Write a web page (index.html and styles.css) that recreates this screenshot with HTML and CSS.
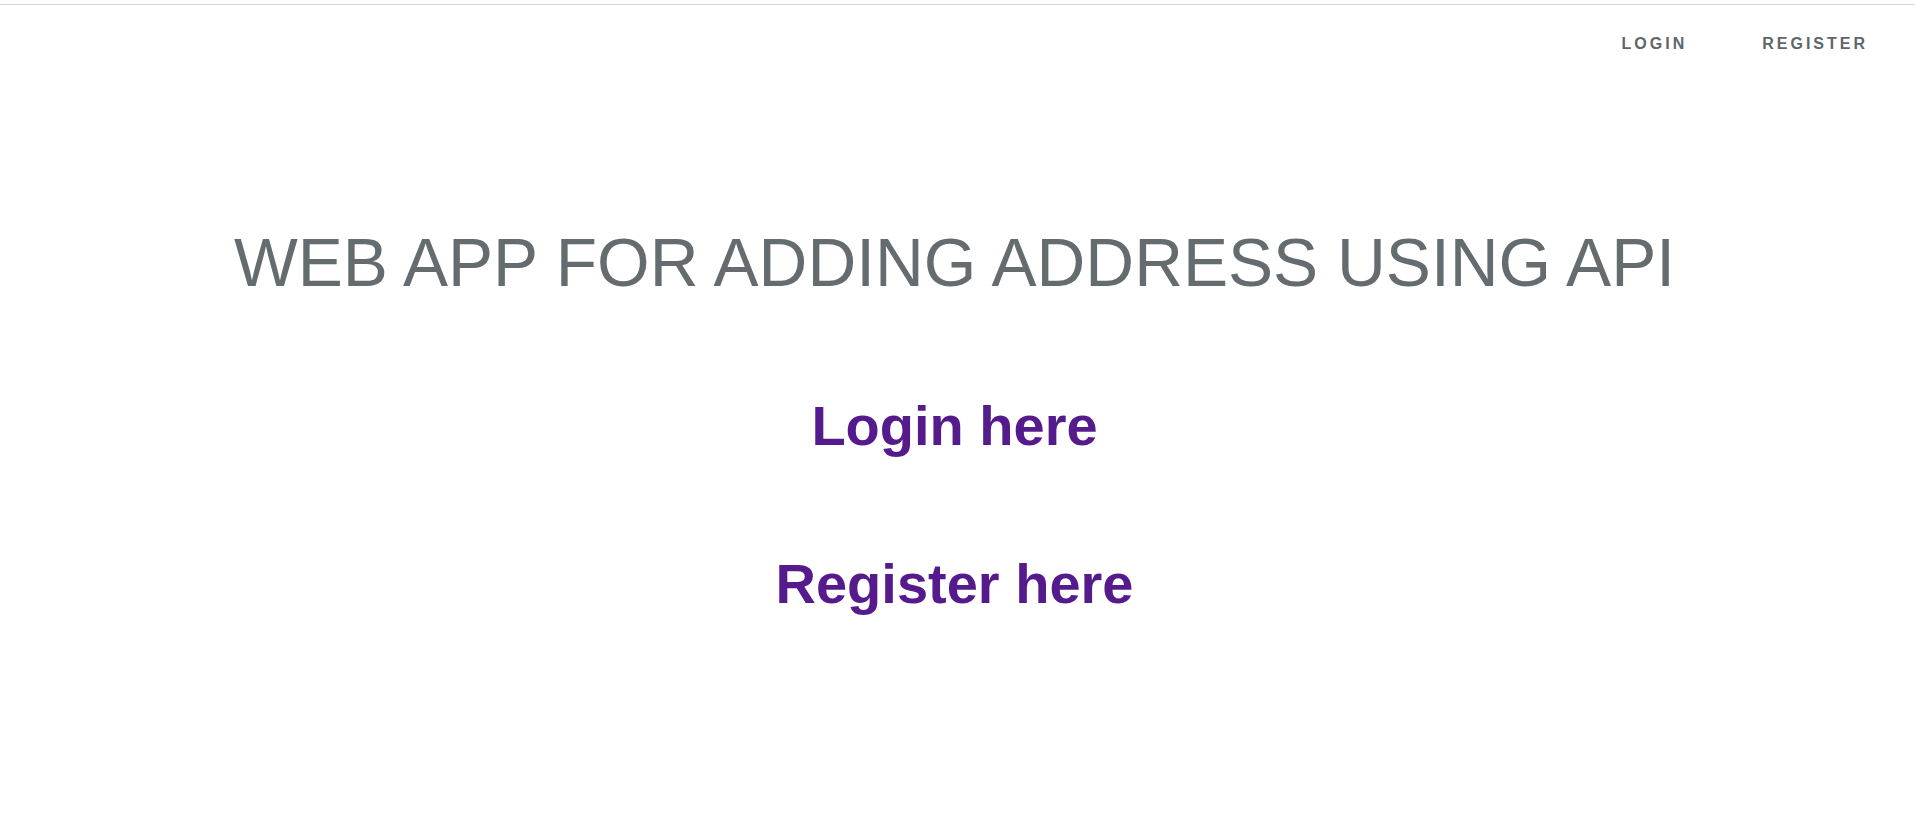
FILE: index.html
```html
<!DOCTYPE html>
<html lang="en">
<head>
<meta charset="utf-8">
<title>Web App</title>
<link rel="stylesheet" href="styles.css">
</head>
<body>
<header class="site-header">
  <nav class="nav">
    <a class="nav-link" href="#login">LOGIN</a>
    <a class="nav-link" href="#register">REGISTER</a>
  </nav>
</header>
<main class="main">
  <h1 class="title">WEB APP FOR ADDING ADDRESS USING API</h1>
  <a class="big-link" href="#login">Login here</a>
  <a class="big-link" href="#register">Register here</a>
</main>
</body>
</html>
```
FILE: styles.css
```css
html, body {
  margin: 0;
  padding: 0;
  background: #ffffff;
}
body {
  font-family: "Liberation Sans", Arial, sans-serif;
  padding-top: 4px;
}
.site-header {
  border-top: 1px solid #d9d9d9;
}
.nav {
  display: flex;
  justify-content: flex-end;
  gap: 75px;
  padding: 29px 47px 0 0;
}
.nav-link {
  font-size: 16px;
  font-weight: bold;
  letter-spacing: 3px;
  line-height: 20px;
  color: #5f6669;
  text-decoration: none;
}
.main {
  display: flex;
  flex-direction: column;
  align-items: center;
  padding-right: 6px;
}
.title {
  margin: 170px 0 0 0;
  font-size: 67.6px;
  line-height: 77px;
  font-weight: normal;
  color: #656c70;
}
.big-link {
  font-size: 56px;
  line-height: 64px;
  font-weight: bold;
  color: #551a8b;
  text-decoration: none;
  margin-top: 93px;
}
.big-link + .big-link {
  margin-top: 94px;
}
```
